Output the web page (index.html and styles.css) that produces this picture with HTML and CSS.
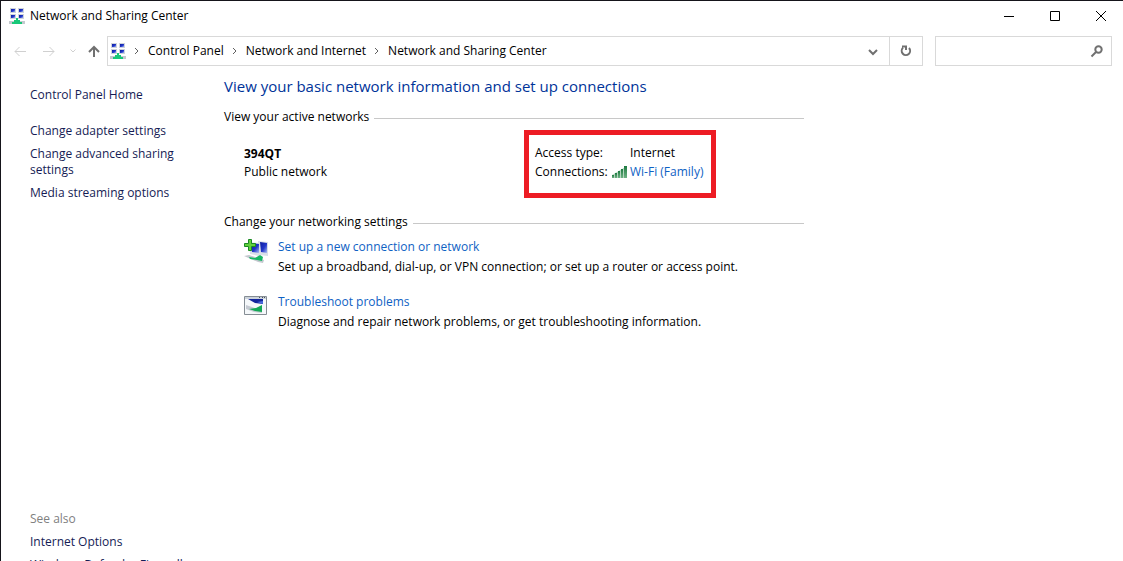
FILE: index.html
```html
<!DOCTYPE html>
<html lang="en">
<head>
<meta charset="utf-8">
<title>Network and Sharing Center</title>
<link rel="stylesheet" href="styles.css">
</head>
<body>
<svg class="defs" aria-hidden="true">
  <defs>
    <linearGradient id="screen" x1="0" y1="0" x2="1" y2="1"><stop offset="0" stop-color="#0a1c9c"/><stop offset=".55" stop-color="#2236c8"/><stop offset="1" stop-color="#a9bdf5"/></linearGradient>
    <linearGradient id="bar" x1="0" y1="0" x2="0" y2="1"><stop offset="0" stop-color="#1d7a40"/><stop offset="1" stop-color="#6fb184"/></linearGradient>
    <symbol id="network" viewBox="0 0 16 16">
      <g fill="#cfd3da"><path d="M1 0h6v5H1zM9 0h6v5H9zM1 6h6v5H1zM9 6h6v5H9z"/></g>
      <g fill="url(#screen)"><path d="M2 1h4v3H2z"/><path d="M10 1h4v3h-4z"/><path d="M2 7h4v3H2z"/><path d="M10 7h4v3h-4z"/></g>
      <path fill="#c4c9ce" d="M0 13h16v3H0z"/>
      <path fill="#18c878" d="M7 10h2v2h2v2h2v2H3v-2h2v-2h2z"/>
    </symbol>
  </defs>
</svg>
<div class="window">
  <header class="titlebar">
    <svg class="icon16" aria-hidden="true"><use href="#network"/></svg>
    <span class="title">Network and Sharing Center</span>
    <div class="controls">
      <button aria-label="Minimize"><svg viewBox="0 0 10 10"><path d="M0 5.500h10"/></svg></button>
      <button aria-label="Maximize"><svg viewBox="0 0 10 10"><path d="M.5.5h9v9h-9z"/></svg></button>
      <button aria-label="Close"><svg viewBox="0 0 10 10"><path d="M0 0l10 10M10 0L0 10"/></svg></button>
    </div>
  </header>
  <nav class="toolbar">
    <div class="history">
      <button class="dim" aria-label="Back"><svg viewBox="0 0 14 14"><path d="M13 7.500H2M6.500 3L2 7.500L6.500 12"/></svg></button>
      <button class="dim" aria-label="Forward"><svg viewBox="0 0 14 14"><path d="M1 7.500h11M7.500 3L12 7.500L7.500 12"/></svg></button>
      <button class="dim recent" aria-label="Recent locations"><svg viewBox="0 0 14 14"><path d="M4.500 5.500L7 8l2.500-2.500"/></svg></button>
      <button class="up" aria-label="Up"><svg viewBox="0 0 14 14"><path d="M7 13V3M2 8l5-5 5 5"/></svg></button>
    </div>
    <div class="address">
      <svg class="icon16" aria-hidden="true"><use href="#network"/></svg>
      <svg class="sep" viewBox="0 0 6 8"><path d="M1 1l3 3-3 3"/></svg>
      <a href="#">Control Panel</a>
      <svg class="sep" viewBox="0 0 6 8"><path d="M1 1l3 3-3 3"/></svg>
      <a href="#">Network and Internet</a>
      <svg class="sep" viewBox="0 0 6 8"><path d="M1 1l3 3-3 3"/></svg>
      <a href="#">Network and Sharing Center</a>
      <button class="drop" aria-label="Previous locations"><svg viewBox="0 0 14 14"><path d="M3 6l4 4 4-4"/></svg></button>
      <button class="refresh" aria-label="Refresh"><svg viewBox="0 0 14 14"><path d="M10 4a4.200 4.200 0 1 1-6-.2M3 2.500h4V6"/></svg></button>
    </div>
    <div class="search">
      <input type="text" aria-label="Search Control Panel">
      <svg viewBox="0 0 14 14" aria-hidden="true"><circle cx="8.500" cy="5.500" r="3.200"/><path d="M6 8L1.500 12.500"/></svg>
    </div>
  </nav>
  <div class="body">
    <aside class="sidebar">
      <a class="home" href="#">Control Panel Home</a>
      <a href="#">Change adapter settings</a>
      <a href="#">Change advanced sharing settings</a>
      <a href="#">Media streaming options</a>
      <div class="also">
        <span>See also</span>
        <a href="#">Internet Options</a>
        <a href="#">Windows Defender Firewall</a>
      </div>
    </aside>
    <main>
      <h1>View your basic network information and set up connections</h1>
      <h2>View your active networks</h2>
      <section class="active">
        <div class="network">
          <strong>394QT</strong>
          <span>Public network</span>
        </div>
        <dl class="details">
          <dt>Access type:</dt><dd>Internet</dd>
          <dt>Connections:
            <svg class="signal" viewBox="0 0 16 14" aria-hidden="true"><path fill="#b5d5bf" d="M0 10L15 1v12H0z"/><g fill="url(#bar)"><path d="M0 10h2v3H0z"/><path d="M3 8h2v5H3z"/><path d="M6 6h2v7H6z"/><path d="M9 4h2v9H9z"/><path d="M12 1h3v12h-3z"/></g></svg>
          </dt><dd><a href="#">Wi-Fi (Family)</a></dd>
        </dl>
      </section>
      <h2>Change your networking settings</h2>
      <section class="tasks">
        <div class="task">
          <svg viewBox="0 0 24 24" aria-hidden="true">
            <path fill="#d9dfe8" d="M5 3l10 1v13L6 15zM14 2l10 1v14l-9-1z"/>
            <path fill="url(#screen)" d="M7 4l8 1v9l-7-1z"/><path fill="url(#screen)" d="M16 3l7 1v10l-6-1z"/>
            <path fill="#c4c8cf" d="M0 17l5-1 15 5-1 3-5-1z"/><path fill="#16b764" d="M5 18l6 1 5-3 3 2-1 4-5-1-7-1z"/>
            <path fill="#62d13c" stroke="#1b8a24" d="M4.500.5h3v4h4v3h-4v4h-3v-4h-4v-3h4z"/>
          </svg>
          <div><a href="#">Set up a new connection or network</a><p>Set up a broadband, dial-up, or VPN connection; or set up a router or access point.</p></div>
        </div>
        <div class="task">
          <svg viewBox="0 0 24 24" aria-hidden="true">
            <path fill="#f5f8fa" stroke="#858d94" d="M.5 2.500h22v18H.5z"/>
            <path fill="#cbd2da" d="M1 3h21v2H1z"/><path fill="#4b535c" d="M15 3h1v1h-1zM18 3h1v1h-1zM20 3h1v1h-1z"/>
            <path fill="#12259c" d="M4 5h15v5l-8-1z"/><path fill="#4c6be0" d="M13 8l6-1v3z"/>
            <path fill="#c5cad2" d="M2 11l6 2 10 4v2l-8-1-8-3z"/><path fill="#13a955" d="M5 15l7-1 6-3v7l-7-1z"/>
          </svg>
          <div><a href="#">Troubleshoot problems</a><p>Diagnose and repair network problems, or get troubleshooting information.</p></div>
        </div>
      </section>
    </main>
  </div>
</div>
</body>
</html>
```
FILE: styles.css
```css
* { box-sizing: border-box; }
html { overflow: hidden; }
body {
  margin: 0;
  background: #fff;
  color: #000;
  font: 12px/16px "Open Sans", "Noto Sans", sans-serif;
}
h1, h2, p, dl, dd { margin: 0; }
a { text-decoration: none; color: #0f62c4; }
button { border: 0; padding: 0; background: none; display: flex; align-items: center; justify-content: center; }
svg { flex: none; }
.defs { position: absolute; width: 0; height: 0; }
.icon16 { width: 16px; height: 16px; }
.window {
  display: flex;
  flex-direction: column;
  min-height: calc(100vh + 20px);
  border-top: 1px solid #15141a;
  border-left: 1px solid #15141a;
}
.titlebar { display: flex; align-items: center; height: 30px; padding-left: 8px; }
.title { margin-left: 5px; }
.controls { display: flex; margin-left: auto; margin-right: -1px; height: 100%; }
.controls button { width: 46px; }
.controls svg { width: 10px; height: 10px; fill: none; stroke: #000; }
.toolbar { display: flex; height: 30px; margin: 5px 11px 0 12px; }
.history { display: flex; width: 94px; }
.history button { width: 14px; margin-right: 15px; }
.history .dim + .dim { margin-right: 10px; }
.history .dim.recent { margin-right: 7px; }
.history svg, .address button svg, .search svg { width: 14px; height: 14px; fill: none; stroke: #707070; stroke-width: 2px; }
.history .dim svg { stroke: #d0d0d0; }
.history .dim svg { stroke-width: 1px; }
.address { display: flex; flex: 1; align-items: center; border: 1px solid #d9d9d9; padding-left: 2px; }
.address a { color: #000; }
.address .sep { width: 6px; height: 8px; margin: 0 8px; fill: none; stroke: #606060; }
.address .drop { margin-left: auto; width: 32px; height: 100%; }
.address .refresh { width: 33px; height: 100%; border-left: 1px solid #d9d9d9; }
.search { display: flex; align-items: center; width: 177px; margin-left: 12px; padding-right: 7px; border: 1px solid #d9d9d9; }
.search input { flex: 1; min-width: 0; height: 100%; border: 0; outline: 0; font: inherit; }
.body { display: flex; flex: 1; }
.sidebar { display: flex; flex-direction: column; gap: 7px; width: 194px; padding: 21px 44px 8px 0; margin-left: 29px; }
.sidebar a { color: #151c55; }
.sidebar .home { margin-bottom: 13px; }
.also { display: flex; flex-direction: column; gap: 7px; margin-top: auto; margin-right: -44px; color: #808080; }
main { flex: 1; max-width: 580px; padding-top: 8px; }
h1 { color: #003399; font-size: 15px; line-height: 24px; font-weight: 400; white-space: nowrap; }
h2 { display: flex; align-items: center; gap: 5px; margin-top: 11px; font-size: 12px; line-height: 16px; font-weight: 400; }
h2::after { content: ""; flex: 1; height: 1px; margin-top: 2px; background: #c8c8c8; }
.active { display: grid; grid-template-columns: 280px 192px; padding: 5px 0 5px 20px; }
.network { display: flex; flex-direction: column; gap: 2px; padding-top: 16px; }
.details { display: grid; grid-template-columns: 95px 1fr; gap: 3px 0; padding: 10px 0 13px 6px; border: 5px solid #ed1c24; white-space: nowrap; align-content: start; }
.details dt { display: flex; justify-content: space-between; padding-right: 2px; }
.signal { width: 16px; height: 14px; margin-top: 1px; }
.tasks { display: grid; gap: 19px; padding: 9px 0 0 20px; }
.task { display: flex; gap: 10px; white-space: nowrap; }
.task svg { width: 24px; height: 24px; }
.task p { margin-top: 4px; }
```
